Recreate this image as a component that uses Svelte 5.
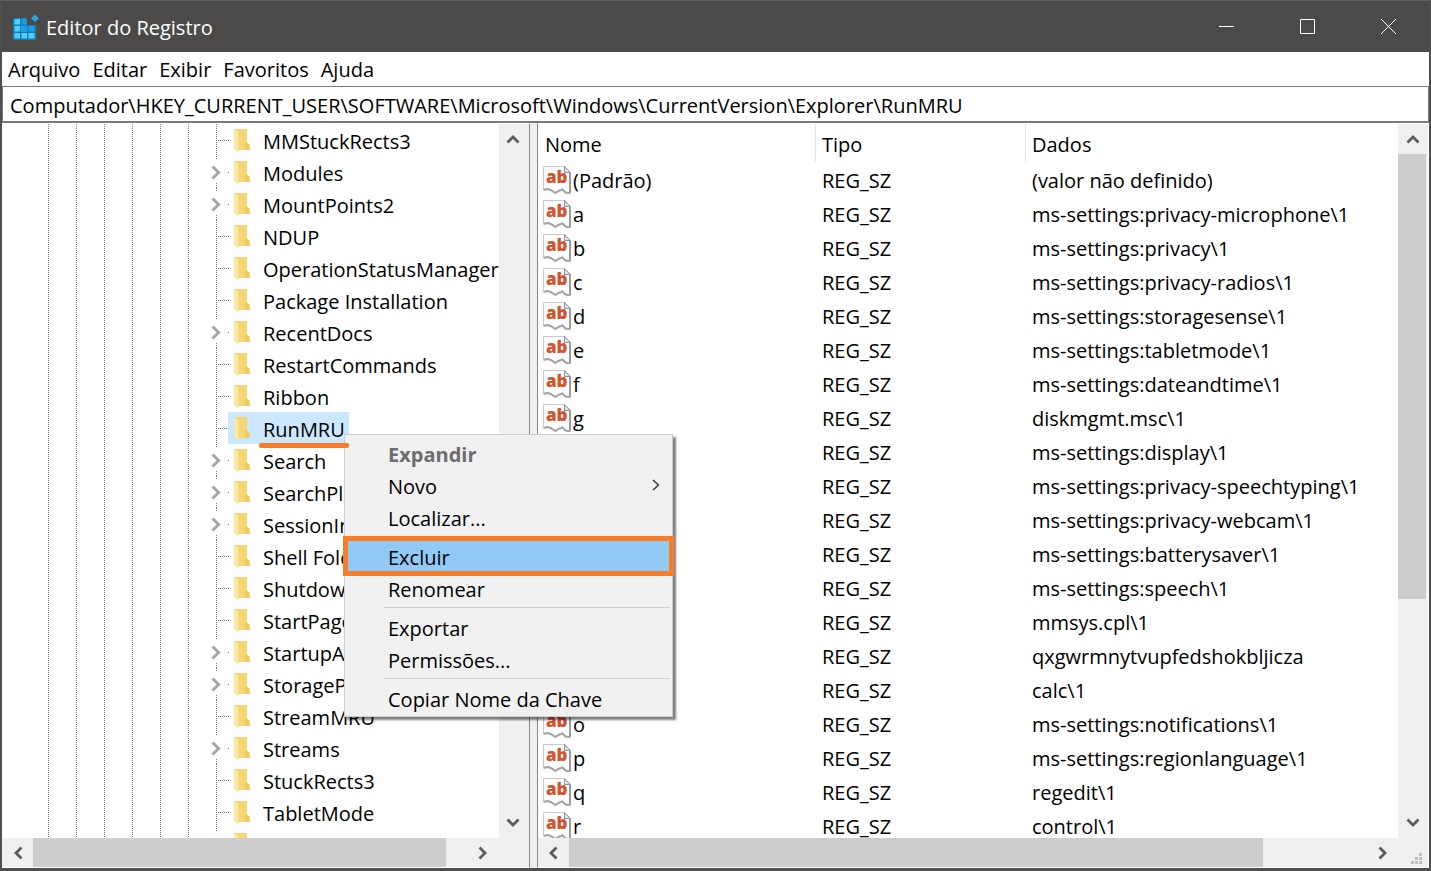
<script lang="ts">
  type TreeKey = { name: string; expandable?: boolean };

  const menus = ['Arquivo', 'Editar', 'Exibir', 'Favoritos', 'Ajuda'];

  const keys: TreeKey[] = [
    { name: 'MMStuckRects3' },
    { name: 'Modules', expandable: true },
    { name: 'MountPoints2', expandable: true },
    { name: 'NDUP' },
    { name: 'OperationStatusManager' },
    { name: 'Package Installation' },
    { name: 'RecentDocs', expandable: true },
    { name: 'RestartCommands' },
    { name: 'Ribbon' },
    { name: 'RunMRU' },
    { name: 'Search', expandable: true },
    { name: 'SearchPlatform', expandable: true },
    { name: 'SessionInfo', expandable: true },
    { name: 'Shell Folders' },
    { name: 'Shutdown' },
    { name: 'StartPage' },
    { name: 'StartupApproved', expandable: true },
    { name: 'StorageProvider', expandable: true },
    { name: 'StreamMRU' },
    { name: 'Streams', expandable: true },
    { name: 'StuckRects3' },
    { name: 'TabletMode' },
    { name: 'Taskband', expandable: true }
  ];

  const values = [
    ['(Padrão)', '(valor não definido)'],
    ['a', 'ms-settings:privacy-microphone\\1'],
    ['b', 'ms-settings:privacy\\1'],
    ['c', 'ms-settings:privacy-radios\\1'],
    ['d', 'ms-settings:storagesense\\1'],
    ['e', 'ms-settings:tabletmode\\1'],
    ['f', 'ms-settings:dateandtime\\1'],
    ['g', 'diskmgmt.msc\\1'],
    ['h', 'ms-settings:display\\1'],
    ['i', 'ms-settings:privacy-speechtyping\\1'],
    ['j', 'ms-settings:privacy-webcam\\1'],
    ['k', 'ms-settings:batterysaver\\1'],
    ['l', 'ms-settings:speech\\1'],
    ['m', 'mmsys.cpl\\1'],
    ['MRUList', 'qxgwrmnytvupfedshokbljicza'],
    ['n', 'calc\\1'],
    ['o', 'ms-settings:notifications\\1'],
    ['p', 'ms-settings:regionlanguage\\1'],
    ['q', 'regedit\\1'],
    ['r', 'control\\1']
  ];

  const guides = [0, 28, 56, 84, 112, 140];

  let selected = $state('RunMRU');
  let path = $state(
    'Computador\\HKEY_CURRENT_USER\\SOFTWARE\\Microsoft\\Windows\\CurrentVersion\\Explorer\\RunMRU'
  );
</script>

{#snippet arrow(dir: string)}
  <button class="arrow {dir}" aria-label={dir}>
    <svg width="14" height="14" viewBox="0 0 14 14">
      <path d="M1.5 10.5 L7 5 L12.5 10.5" fill="none" stroke="#5c5c5c" stroke-width="2.8" />
    </svg>
  </button>
{/snippet}

<div class="window">
  <header class="titlebar">
    <svg class="app-icon" width="26" height="26" viewBox="0 0 26 26">
      <path d="M0 4h14v7h9v15H0z" fill="#0b80bd" />
      <path d="M1.500 5h5.500v5.500h-5.500zM1.500 12h5.500v5.500h-5.500zM1.500 19h5.500v5.500h-5.500zM8.500 12h5.500v5.500h-5.500zM8.500 19h5.500v5.500h-5.500zM15.500 19h6v5.500h-6z" fill="#56ccfa" />
      <path d="M8.500 5h5v5.500h-5zM15.500 12h6v5.500h-6zM8.500 12h5.500v5.500h-5.500z" fill="#1b9fe0" />
      <path d="M22 0.500l4 3.700-4 3.700-4-3.700z" fill="#2aa5e4" />
    </svg>
    <h1>Editor do Registro</h1>
    <div class="window-buttons">
      <button aria-label="Minimizar">
        <svg width="17" height="17" viewBox="0 0 17 17"><path d="M1 8.500h15" /></svg>
      </button>
      <button aria-label="Maximizar">
        <svg width="17" height="17" viewBox="0 0 17 17"><path d="M1.500 1.500h14v14h-14z" /></svg>
      </button>
      <button aria-label="Fechar">
        <svg width="17" height="17" viewBox="0 0 17 17"><path d="M1 1l15 15M16 1L1 16" /></svg>
      </button>
    </div>
  </header>

  <nav class="menubar">
    {#each menus as menu}
      <button>{menu}</button>
    {/each}
  </nav>

  <input class="address" aria-label="Caminho" bind:value={path} />

  <main class="panes">
    <section class="pane tree-pane">
      <ul class="tree">
        {#each keys as key}
          <li>
            <svg class="guides" width="162" height="32">
              {#each guides as x}
                <path d="M{x + 0.5} 0v32" />
              {/each}
            </svg>
            {#if key.expandable}
              <button class="branch" aria-label="Expandir {key.name}">
                <svg width="20" height="32">
                  <path d="M6.500 0v3M6.500 27v5M18 16.500h1" />
                  <path class="chevron" d="M2.500 10.500l6 6-6 6" />
                </svg>
              </button>
            {:else}
              <span class="branch">
                <svg width="20" height="32"><path d="M6.500 0v32M8 16.500h12" /></svg>
              </span>
            {/if}
            <button
              class="key"
              class:selected={selected === key.name}
              onclick={() => (selected = key.name)}
            >
              <svg class="folder" width="18" height="24" viewBox="0 0 18 24">
                <path d="M1 0h13v13.500l2.500 2v5.500H5z" fill="#f7d774" />
                <path d="M12 13.500h2l2.500 2v5.500H12z" fill="#f1c95f" />
                <path d="M1 0.500l4.500 2.500v20.500L1 20z" fill="#fce8a6" />
              </svg>
              {key.name}
            </button>
          </li>
        {/each}
      </ul>
      <div class="scroll vertical">
        {@render arrow('up')}
        <div class="track"></div>
        {@render arrow('down')}
      </div>
      <div class="scroll horizontal">
        {@render arrow('left')}
        <div class="track"><div class="thumb"></div></div>
        {@render arrow('right')}
      </div>
      <div class="corner"></div>
    </section>

    <section class="pane list-pane">
      <div class="list">
        <table>
          <thead>
            <tr><th class="name">Nome</th><th class="type">Tipo</th><th>Dados</th></tr>
          </thead>
          <tbody>
            {#each values as [name, data]}
              <tr>
                <td>
                  <div class="value">
                    <svg width="28" height="28" viewBox="0 0 28 28">
                      <path d="M0.500 0.500h21l6 6V27l-5-1-3-3-4 1.500-3 2-5-3-3-1-4 1z" fill="#fdfdfd" stroke="#c9cbcd" />
                      <path d="M21.500 0.500v6h6z" fill="#dfe2e4" stroke="#8d9296" />
                      <path d="M27 6.500V27" stroke="#9a9da0" stroke-width="2" />
                      <path d="M0.500 24l4-1 3 1 5 3 3-2 4-1.500 3 3 5 1" fill="none" stroke="#a3a6a8" stroke-width="2" />
                      <text x="3" y="17" font-size="17">ab</text>
                    </svg>
                    {name}
                  </div>
                </td>
                <td>REG_SZ</td>
                <td>{data}</td>
              </tr>
            {/each}
          </tbody>
        </table>
      </div>
      <div class="scroll vertical">
        {@render arrow('up')}
        <div class="track"><div class="thumb"></div></div>
        {@render arrow('down')}
      </div>
      <div class="scroll horizontal">
        {@render arrow('left')}
        <div class="track"><div class="thumb"></div></div>
        {@render arrow('right')}
      </div>
      <div class="corner">
        <svg width="12" height="12" viewBox="0 0 12 12">
          <path d="M9 0h3v3H9zM5 4h3v3H5zM9 4h3v3H9zM1 8h3v3H1zM5 8h3v3H5zM9 8h3v3H9z" fill="#bfbfbf" />
        </svg>
      </div>
    </section>
  </main>

  <div class="context-menu" role="menu">
    <button role="menuitem" class="default" disabled>Expandir</button>
    <button role="menuitem">
      Novo
      <svg width="8" height="12" viewBox="0 0 8 12">
        <path d="M1 1l5.500 5L1 11" fill="none" stroke="#333" stroke-width="1.400" />
      </svg>
    </button>
    <button role="menuitem">Localizar...</button>
    <hr />
    <button role="menuitem" class="active">Excluir</button>
    <button role="menuitem">Renomear</button>
    <hr />
    <button role="menuitem">Exportar</button>
    <button role="menuitem">Permissões...</button>
    <hr />
    <button role="menuitem">Copiar Nome da Chave</button>
  </div>
</div>

<style>
  :global(body) {
    margin: 0;
    overflow: hidden;
  }

  .window,
  .window * {
    box-sizing: border-box;
  }

  .window {
    height: 100vh;
    display: flex;
    flex-direction: column;
    position: relative;
    border: 2px solid #4e4f50;
    border-top: 1px solid #62615f;
    border-bottom-width: 3px;
    background: #fff;
    color: #000;
    font: 20px/32px 'Open Sans', 'Noto Sans', sans-serif;
  }

  button {
    padding: 0;
    border: 0;
    background: none;
    color: inherit;
    font: inherit;
    text-align: left;
    white-space: nowrap;
  }

  svg {
    flex: none;
    display: block;
  }

  .titlebar {
    flex: none;
    display: flex;
    align-items: center;
    height: 51px;
    padding-left: 11px;
    background: #4b4a48;
    color: #fff;
  }

  h1 {
    margin: 0 auto 0 7px;
    padding-top: 2px;
    font-size: 20px;
    font-weight: 400;
  }

  .window-buttons {
    display: flex;
    height: 100%;
  }

  .window-buttons button {
    width: 81px;
    display: grid;
    place-items: center;
  }

  .window-buttons path {
    fill: none;
    stroke: #fff;
  }

  .menubar {
    flex: none;
    display: flex;
    gap: 12px;
    height: 34px;
    padding: 2px 0 0 6px;
  }

  .address {
    flex: none;
    height: 37px;
    width: 100%;
    padding: 2px 7px 0;
    border: 1px solid #7a7a7a;
    border-bottom-width: 2px;
    outline: 0;
    background: #fff;
    color: inherit;
    font: inherit;
  }

  .panes {
    flex: 1;
    min-height: 0;
    display: flex;
    gap: 7px;
    background: #f0f0f0;
  }

  .pane {
    min-width: 0;
    display: grid;
    grid-template: minmax(0, 1fr) 29px / minmax(0, 1fr) 30px;
    border: 1px solid #fff;
    border-width: 1px 0;
    background: #fff;
  }

  .tree-pane {
    flex: 0 0 37%;
    border-right: 1px solid #828790;
  }

  .list-pane {
    flex: 1;
    padding-right: 1px;
    border-left: 1px solid #828790;
  }

  .tree {
    margin: 0;
    padding: 0 0 0 46px;
    overflow: hidden;
    list-style: none;
  }

  .tree li {
    display: flex;
    height: 32px;
  }

  .guides path,
  .branch path {
    stroke: #777;
    stroke-dasharray: 1 1;
  }

  .branch {
    width: 18px;
  }

  .branch .chevron {
    fill: none;
    stroke: #a6a6a6;
    stroke-width: 3;
    stroke-dasharray: none;
  }

  .key {
    position: relative;
    display: flex;
    align-items: center;
    gap: 12px;
    padding: 4px 4px 0 5px;
  }

  .folder {
    margin-bottom: 2px;
  }

  .key.selected {
    background: #cce8ff;
  }

  .key.selected::after {
    content: '';
    position: absolute;
    z-index: 2;
    left: 31px;
    right: 0;
    bottom: -4px;
    height: 5px;
    border-radius: 2px;
    background: #f97d28;
  }

  .list {
    overflow: hidden;
  }

  table {
    width: 100%;
    table-layout: fixed;
    border-collapse: separate;
    border-spacing: 0;
  }

  th,
  td {
    height: 34px;
    padding: 4px 0 0 7px;
    font-weight: 400;
    line-height: 30px;
    text-align: left;
    white-space: nowrap;
  }

  th {
    height: 38px;
    padding-left: 6px;
    border-left: 1px solid #e5e5e5;
  }

  th.name {
    width: 277px;
    border-left-color: transparent;
  }

  th.type {
    width: 210px;
  }

  .value {
    display: flex;
    align-items: flex-start;
    gap: 2px;
    height: 30px;
    margin-left: -2px;
  }

  .value text {
    fill: #d4532f;
    font-weight: 800;
  }

  .scroll {
    display: flex;
    background: #f0f0f0;
  }

  .vertical {
    flex-direction: column;
  }

  .track {
    flex: 1;
  }

  .thumb {
    background: #cdcdcd;
  }

  .horizontal .thumb {
    width: 87%;
    height: 100%;
  }

  .tree-pane .horizontal .thumb {
    width: 95%;
  }

  .vertical .thumb {
    height: 68%;
    margin-right: 2px;
  }

  .arrow {
    flex: none;
    width: 31px;
    height: 30px;
    display: grid;
    place-items: center;
  }

  .vertical .arrow {
    width: 29px;
  }

  .down svg {
    transform: rotate(180deg);
  }

  .left svg {
    transform: rotate(-90deg);
  }

  .right svg {
    transform: rotate(90deg);
  }

  .corner {
    display: flex;
    align-items: flex-end;
    justify-content: flex-end;
    padding: 0 6px 2px 0;
    background: #f0f0f0;
  }

  .context-menu {
    position: absolute;
    left: 342px;
    top: 433px;
    width: 329px;
    padding: 2px;
    border: 1px solid #ccc;
    background: #f1f1f1;
    box-shadow: 3px 3px 2px rgba(0, 0, 0, 0.5);
  }

  .context-menu button {
    width: 100%;
    height: 32px;
    display: flex;
    align-items: center;
    justify-content: space-between;
    padding: 4px 10px 0 41px;
  }

  .context-menu svg {
    margin-bottom: 4px;
  }

  .context-menu .default {
    color: #6d6d6d;
    font-weight: 700;
  }

  .context-menu .active {
    background: #91c9f7;
    outline: 5px solid #f97d28;
    outline-offset: -1px;
  }

  hr {
    height: 1px;
    margin: 3px 0 3px 37px;
    border: 0;
    background: #d0d0d0;
  }
</style>
